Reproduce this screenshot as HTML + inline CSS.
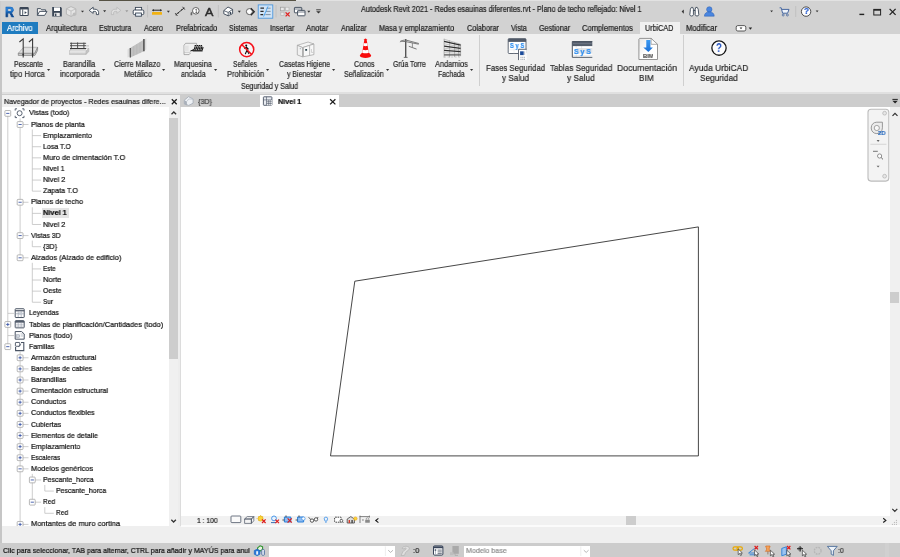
<!DOCTYPE html>
<html lang="es"><head><meta charset="utf-8"><title>Autodesk Revit 2021 - Redes esauinas diferentes.rvt</title>
<style>
html,body{margin:0;padding:0;}
body{width:900px;height:557px;overflow:hidden;position:relative;background:#fff;font-family:'Liberation Sans', sans-serif;}
#app{position:absolute;left:0;top:0;width:900px;height:557px;overflow:hidden;background:#fff;}
#app div,#app svg,#app span{position:absolute;}
#app span{white-space:pre;line-height:10px;transform-origin:0 50%;will-change:transform;-webkit-text-stroke:0.22px currentColor;}
#app svg{overflow:visible;}
</style></head><body><div id="app">
<div style="left:0px;top:0px;width:900px;height:557px;background:#f0f0f0;"></div>
<div style="left:0px;top:0px;width:900px;height:34px;background:#d2d2d2;"></div>
<div style="left:0px;top:0px;width:900px;height:0.9px;background:#e2e2e2;"></div>
<div style="left:98.7px;top:0px;width:197.5px;height:1.3px;background:#565244;"></div>
<div style="left:1.8px;top:22px;width:36.4px;height:12.6px;background:#1f7cc0;"></div>
<div style="left:640px;top:22px;width:39.5px;height:12px;background:#f0f0f0;"></div>
<div style="left:0px;top:34px;width:900px;height:59px;background:#f0f0f0;"></div>
<div style="left:0px;top:92.4px;width:900px;height:1.2px;background:#e0e0e0;"></div>
<div style="left:0px;top:93.5px;width:900px;height:1.7px;background:#cdcdcd;"></div>
<div style="left:180.2px;top:95px;width:719.8px;height:12.2px;background:#cdcdcd;"></div>
<div style="left:1.6px;top:95px;width:178.6px;height:12.5px;background:#f0f0f0;"></div>
<div style="left:2px;top:107.3px;width:167.2px;height:418.7px;background:#fff;"></div>
<div style="left:169.2px;top:107.3px;width:9.2px;height:418.7px;background:#f0f0f0;"></div>
<div style="left:169.3px;top:118.4px;width:9.0px;height:240.6px;background:#cdcdcd;"></div>
<div style="left:178.4px;top:107.2px;width:1.8px;height:418.8px;background:#ededed;"></div>
<div style="left:180.2px;top:107.2px;width:0.8px;height:418.8px;background:#dcdcdc;"></div>
<div style="left:181px;top:107px;width:709px;height:408.7px;background:#fff;"></div>
<div style="left:260px;top:95.1px;width:78.9px;height:12.4px;background:#fff;"></div>
<div style="left:890px;top:107px;width:10px;height:408.7px;background:#f0f0f0;"></div>
<div style="left:890.2px;top:292px;width:9px;height:10.6px;background:#cdcdcd;"></div>
<div style="left:181px;top:515.7px;width:719px;height:9.6px;background:#f1f1f1;"></div>
<div style="left:181px;top:525.3px;width:719px;height:1.6px;background:#fbfbfb;"></div>
<div style="left:626px;top:516.2px;width:10px;height:8.6px;background:#cdcdcd;"></div>
<div style="left:0px;top:526.9px;width:900px;height:15.8px;background:#efefef;z-index:5"></div>
<div style="left:0px;top:526px;width:181px;height:1px;background:#efefef;z-index:5"></div>
<div style="left:0px;top:542.6px;width:900px;height:14.4px;background:#cccccc;"></div>
<div style="left:0px;top:34px;width:1.6px;height:509px;background:#c6c6c6;z-index:6"></div>
<div style="left:0px;top:1px;width:1.2px;height:33px;background:#cdcdcd;"></div>
<div style="left:268.8px;top:545.6px;width:126px;height:11.4px;background:#fff;"></div>
<div style="left:464px;top:545.6px;width:126px;height:11.4px;background:#fff;"></div>
<div style="left:479px;top:35px;width:0.8px;height:50.5px;background:#cfcfcf;"></div>
<div style="left:683.1px;top:35px;width:0.8px;height:50.5px;background:#cfcfcf;"></div>
<div style="left:42.3px;top:207.972px;width:27px;height:10.4px;background:#e4e4e4;"></div>
<div style="left:884.6px;top:543px;width:4.8px;height:14px;background:#d0d0d0;"></div>
<svg style="left:47.0px;top:69.0px" width="3.2" height="2" viewBox="0 0 3.2 2"><path d="M0 0h3.2L1.6 2z" fill="#333"/></svg>
<svg style="left:101.9px;top:69.0px" width="3.2" height="2" viewBox="0 0 3.2 2"><path d="M0 0h3.2L1.6 2z" fill="#333"/></svg>
<svg style="left:161.9px;top:69.0px" width="3.2" height="2" viewBox="0 0 3.2 2"><path d="M0 0h3.2L1.6 2z" fill="#333"/></svg>
<svg style="left:213.70000000000002px;top:69.0px" width="3.2" height="2" viewBox="0 0 3.2 2"><path d="M0 0h3.2L1.6 2z" fill="#333"/></svg>
<svg style="left:266.4px;top:69.0px" width="3.2" height="2" viewBox="0 0 3.2 2"><path d="M0 0h3.2L1.6 2z" fill="#333"/></svg>
<svg style="left:332.0px;top:69.0px" width="3.2" height="2" viewBox="0 0 3.2 2"><path d="M0 0h3.2L1.6 2z" fill="#333"/></svg>
<svg style="left:385.7px;top:69.0px" width="3.2" height="2" viewBox="0 0 3.2 2"><path d="M0 0h3.2L1.6 2z" fill="#333"/></svg>
<svg style="left:469.7px;top:69.0px" width="3.2" height="2" viewBox="0 0 3.2 2"><path d="M0 0h3.2L1.6 2z" fill="#333"/></svg>
<svg style="left:0px;top:0px" width="180" height="526" viewBox="0 0 180 526"><path d="M20.1 124.50800000000001H28.5" stroke="#b8b8b8" stroke-width="0.7"/><path d="M32.3 135.616H41.099999999999994" stroke="#b8b8b8" stroke-width="0.7"/><path d="M32.3 146.724H41.099999999999994" stroke="#b8b8b8" stroke-width="0.7"/><path d="M32.3 157.832H41.099999999999994" stroke="#b8b8b8" stroke-width="0.7"/><path d="M32.3 168.94H41.099999999999994" stroke="#b8b8b8" stroke-width="0.7"/><path d="M32.3 180.048H41.099999999999994" stroke="#b8b8b8" stroke-width="0.7"/><path d="M32.3 191.156H41.099999999999994" stroke="#b8b8b8" stroke-width="0.7"/><path d="M20.1 202.264H28.5" stroke="#b8b8b8" stroke-width="0.7"/><path d="M32.3 213.372H41.099999999999994" stroke="#b8b8b8" stroke-width="0.7"/><path d="M32.3 224.48000000000002H41.099999999999994" stroke="#b8b8b8" stroke-width="0.7"/><path d="M20.1 235.58800000000002H28.5" stroke="#b8b8b8" stroke-width="0.7"/><path d="M32.3 246.696H41.099999999999994" stroke="#b8b8b8" stroke-width="0.7"/><path d="M20.1 257.804H28.5" stroke="#b8b8b8" stroke-width="0.7"/><path d="M32.3 268.91200000000003H41.099999999999994" stroke="#b8b8b8" stroke-width="0.7"/><path d="M32.3 280.02H41.099999999999994" stroke="#b8b8b8" stroke-width="0.7"/><path d="M32.3 291.12800000000004H41.099999999999994" stroke="#b8b8b8" stroke-width="0.7"/><path d="M32.3 302.236H41.099999999999994" stroke="#b8b8b8" stroke-width="0.7"/><path d="M7.8 313.34400000000005H14" stroke="#b8b8b8" stroke-width="0.7"/><path d="M7.8 335.56000000000006H14" stroke="#b8b8b8" stroke-width="0.7"/><path d="M20.1 357.776H28.5" stroke="#b8b8b8" stroke-width="0.7"/><path d="M20.1 368.884H28.5" stroke="#b8b8b8" stroke-width="0.7"/><path d="M20.1 379.99199999999996H28.5" stroke="#b8b8b8" stroke-width="0.7"/><path d="M20.1 391.1H28.5" stroke="#b8b8b8" stroke-width="0.7"/><path d="M20.1 402.20799999999997H28.5" stroke="#b8b8b8" stroke-width="0.7"/><path d="M20.1 413.31600000000003H28.5" stroke="#b8b8b8" stroke-width="0.7"/><path d="M20.1 424.424H28.5" stroke="#b8b8b8" stroke-width="0.7"/><path d="M20.1 435.53200000000004H28.5" stroke="#b8b8b8" stroke-width="0.7"/><path d="M20.1 446.64H28.5" stroke="#b8b8b8" stroke-width="0.7"/><path d="M20.1 457.74800000000005H28.5" stroke="#b8b8b8" stroke-width="0.7"/><path d="M20.1 468.856H28.5" stroke="#b8b8b8" stroke-width="0.7"/><path d="M32.3 479.96400000000006H41.099999999999994" stroke="#b8b8b8" stroke-width="0.7"/><path d="M44.8 491.072H53.8" stroke="#b8b8b8" stroke-width="0.7"/><path d="M32.3 502.18000000000006H41.099999999999994" stroke="#b8b8b8" stroke-width="0.7"/><path d="M44.8 513.288H53.8" stroke="#b8b8b8" stroke-width="0.7"/><path d="M20.1 524.3960000000001H28.5" stroke="#b8b8b8" stroke-width="0.7"/><path d="M20.1 118.4V257.804" stroke="#b8b8b8" stroke-width="0.7"/><path d="M32.3 129.508V191.156" stroke="#b8b8b8" stroke-width="0.7"/><path d="M32.3 207.264V224.48000000000002" stroke="#b8b8b8" stroke-width="0.7"/><path d="M32.3 240.58800000000002V246.696" stroke="#b8b8b8" stroke-width="0.7"/><path d="M32.3 262.804V302.236" stroke="#b8b8b8" stroke-width="0.7"/><path d="M20.1 351.668V526.0" stroke="#b8b8b8" stroke-width="0.7"/><path d="M32.3 473.856V502.18000000000006" stroke="#b8b8b8" stroke-width="0.7"/><path d="M44.8 484.96400000000006V491.072" stroke="#b8b8b8" stroke-width="0.7"/><path d="M44.8 507.18000000000006V513.288" stroke="#b8b8b8" stroke-width="0.7"/><path d="M7.8 113.4V346.668" stroke="#b8b8b8" stroke-width="0.7"/><rect x="4.9" y="110.5" width="5.8" height="5.8" rx="0.8" fill="#fff" stroke="#9a9a9a" stroke-width="0.7"/><path d="M6.199999999999999 113.4H9.4" stroke="#3b56a8" stroke-width="0.9"/><rect x="17.200000000000003" y="121.608" width="5.8" height="5.8" rx="0.8" fill="#fff" stroke="#9a9a9a" stroke-width="0.7"/><path d="M18.5 124.50800000000001H21.700000000000003" stroke="#3b56a8" stroke-width="0.9"/><rect x="17.200000000000003" y="199.364" width="5.8" height="5.8" rx="0.8" fill="#fff" stroke="#9a9a9a" stroke-width="0.7"/><path d="M18.5 202.264H21.700000000000003" stroke="#3b56a8" stroke-width="0.9"/><rect x="17.200000000000003" y="232.68800000000002" width="5.8" height="5.8" rx="0.8" fill="#fff" stroke="#9a9a9a" stroke-width="0.7"/><path d="M18.5 235.58800000000002H21.700000000000003" stroke="#3b56a8" stroke-width="0.9"/><rect x="17.200000000000003" y="254.90399999999997" width="5.8" height="5.8" rx="0.8" fill="#fff" stroke="#9a9a9a" stroke-width="0.7"/><path d="M18.5 257.804H21.700000000000003" stroke="#3b56a8" stroke-width="0.9"/><rect x="4.9" y="321.552" width="5.8" height="5.8" rx="0.8" fill="#fff" stroke="#9a9a9a" stroke-width="0.7"/><path d="M6.199999999999999 324.452H9.4" stroke="#3b56a8" stroke-width="0.9"/><path d="M7.8 322.852V326.052" stroke="#3b56a8" stroke-width="0.9"/><rect x="4.9" y="343.76800000000003" width="5.8" height="5.8" rx="0.8" fill="#fff" stroke="#9a9a9a" stroke-width="0.7"/><path d="M6.199999999999999 346.668H9.4" stroke="#3b56a8" stroke-width="0.9"/><rect x="17.200000000000003" y="354.87600000000003" width="5.8" height="5.8" rx="0.8" fill="#fff" stroke="#9a9a9a" stroke-width="0.7"/><path d="M18.5 357.776H21.700000000000003" stroke="#3b56a8" stroke-width="0.9"/><path d="M20.1 356.176V359.37600000000003" stroke="#3b56a8" stroke-width="0.9"/><rect x="17.200000000000003" y="365.98400000000004" width="5.8" height="5.8" rx="0.8" fill="#fff" stroke="#9a9a9a" stroke-width="0.7"/><path d="M18.5 368.884H21.700000000000003" stroke="#3b56a8" stroke-width="0.9"/><path d="M20.1 367.284V370.48400000000004" stroke="#3b56a8" stroke-width="0.9"/><rect x="17.200000000000003" y="377.092" width="5.8" height="5.8" rx="0.8" fill="#fff" stroke="#9a9a9a" stroke-width="0.7"/><path d="M18.5 379.99199999999996H21.700000000000003" stroke="#3b56a8" stroke-width="0.9"/><path d="M20.1 378.39199999999994V381.592" stroke="#3b56a8" stroke-width="0.9"/><rect x="17.200000000000003" y="388.20000000000005" width="5.8" height="5.8" rx="0.8" fill="#fff" stroke="#9a9a9a" stroke-width="0.7"/><path d="M18.5 391.1H21.700000000000003" stroke="#3b56a8" stroke-width="0.9"/><path d="M20.1 389.5V392.70000000000005" stroke="#3b56a8" stroke-width="0.9"/><rect x="17.200000000000003" y="399.308" width="5.8" height="5.8" rx="0.8" fill="#fff" stroke="#9a9a9a" stroke-width="0.7"/><path d="M18.5 402.20799999999997H21.700000000000003" stroke="#3b56a8" stroke-width="0.9"/><path d="M20.1 400.60799999999995V403.808" stroke="#3b56a8" stroke-width="0.9"/><rect x="17.200000000000003" y="410.41600000000005" width="5.8" height="5.8" rx="0.8" fill="#fff" stroke="#9a9a9a" stroke-width="0.7"/><path d="M18.5 413.31600000000003H21.700000000000003" stroke="#3b56a8" stroke-width="0.9"/><path d="M20.1 411.716V414.91600000000005" stroke="#3b56a8" stroke-width="0.9"/><rect x="17.200000000000003" y="421.524" width="5.8" height="5.8" rx="0.8" fill="#fff" stroke="#9a9a9a" stroke-width="0.7"/><path d="M18.5 424.424H21.700000000000003" stroke="#3b56a8" stroke-width="0.9"/><path d="M20.1 422.82399999999996V426.024" stroke="#3b56a8" stroke-width="0.9"/><rect x="17.200000000000003" y="432.63200000000006" width="5.8" height="5.8" rx="0.8" fill="#fff" stroke="#9a9a9a" stroke-width="0.7"/><path d="M18.5 435.53200000000004H21.700000000000003" stroke="#3b56a8" stroke-width="0.9"/><path d="M20.1 433.932V437.13200000000006" stroke="#3b56a8" stroke-width="0.9"/><rect x="17.200000000000003" y="443.74" width="5.8" height="5.8" rx="0.8" fill="#fff" stroke="#9a9a9a" stroke-width="0.7"/><path d="M18.5 446.64H21.700000000000003" stroke="#3b56a8" stroke-width="0.9"/><path d="M20.1 445.03999999999996V448.24" stroke="#3b56a8" stroke-width="0.9"/><rect x="17.200000000000003" y="454.84800000000007" width="5.8" height="5.8" rx="0.8" fill="#fff" stroke="#9a9a9a" stroke-width="0.7"/><path d="M18.5 457.74800000000005H21.700000000000003" stroke="#3b56a8" stroke-width="0.9"/><path d="M20.1 456.148V459.34800000000007" stroke="#3b56a8" stroke-width="0.9"/><rect x="17.200000000000003" y="465.956" width="5.8" height="5.8" rx="0.8" fill="#fff" stroke="#9a9a9a" stroke-width="0.7"/><path d="M18.5 468.856H21.700000000000003" stroke="#3b56a8" stroke-width="0.9"/><rect x="29.4" y="477.0640000000001" width="5.8" height="5.8" rx="0.8" fill="#fff" stroke="#9a9a9a" stroke-width="0.7"/><path d="M30.699999999999996 479.96400000000006H33.9" stroke="#3b56a8" stroke-width="0.9"/><rect x="29.4" y="499.2800000000001" width="5.8" height="5.8" rx="0.8" fill="#fff" stroke="#9a9a9a" stroke-width="0.7"/><path d="M30.699999999999996 502.18000000000006H33.9" stroke="#3b56a8" stroke-width="0.9"/><rect x="17.200000000000003" y="521.4960000000001" width="5.8" height="5.8" rx="0.8" fill="#fff" stroke="#9a9a9a" stroke-width="0.7"/><path d="M18.5 524.3960000000001H21.700000000000003" stroke="#3b56a8" stroke-width="0.9"/><path d="M20.1 522.796V525.9960000000001" stroke="#3b56a8" stroke-width="0.9"/></svg>
<svg style="left:0px;top:0px" width="900" height="557" viewBox="0 0 900 557"><rect x="20" y="7.5" width="8.2" height="8" rx="0.8" fill="#fff" stroke="#3a4656" stroke-width="1.1"/><path d="M20 8.5H28.2" stroke="#3a4656" stroke-width="1.9"/><path d="M22.7 9.4V15.5" stroke="#3a4656" stroke-width="0.9"/><path d="M24.6 11.2l2.200 1.400-2.200 1.400z" fill="#3a4656"/><path d="M37.4 15.3V8.6h3.2l1 1.2h4v1.6" fill="#f4f4f4" stroke="#3a4656" stroke-width="0.9" stroke-linejoin="round"/><path d="M37.4 15.4l2.2-4h7.4l-2.4 4z" fill="#fff" stroke="#3a4656" stroke-width="0.9" stroke-linejoin="round"/><path d="M52.2 7h8.6l1 1v8.6h-9.6z" fill="#3a4656"/><rect x="54" y="7.4" width="6" height="3.6" fill="#fff"/><rect x="54.2" y="12.8" width="5.6" height="3.2" fill="#e9e9e9"/><rect x="55" y="13.6" width="1.4" height="2.4" fill="#3a4656"/><path d="M71 6.6l4.8 2.2v5.4L71 16.4l-4.6-2.2V8.8z" fill="#e4e4e4" stroke="#aeaeae" stroke-width="0.8" stroke-linejoin="round"/><path d="M66.4 8.8L71 11l4.8-2.2M71 11v5.4" fill="none" stroke="#b4b4b4" stroke-width="0.7"/><circle cx="74.4" cy="14.2" r="1.8" fill="#bdbdbd"/><path d="M81.0 10.65h3.0L82.5 12.549999999999999z" fill="#333"/><path d="M89.2 10.4l4-3.2v2h1.6c2.6 0 3.8 1.6 3.8 3.4v2h-2.2v-1.6c0-1-.6-1.6-1.6-1.6h-1.6v2z" fill="#fff" stroke="#3a4656" stroke-width="0.9" stroke-linejoin="round"/><path d="M103.1 10.25h3.0L104.6 12.149999999999999z" fill="#333"/><path d="M120.8 10.4l-4-3.2v2h-1.6c-2.6 0-3.8 1.6-3.8 3.4v2h2.2v-1.6c0-1 .6-1.6 1.6-1.6h1.6v2z" fill="#dedede" stroke="#b9b9b9" stroke-width="0.8" stroke-linejoin="round"/><path d="M125.3 10.25h3.0L126.8 12.149999999999999z" fill="#9a9a9a"/><rect x="135.4" y="7.4" width="6.2" height="3.4" fill="#fff" stroke="#3a4656" stroke-width="0.9"/><rect x="133.2" y="10" width="10.6" height="4.6" rx="1.2" fill="#fff" stroke="#3a4656" stroke-width="1"/><rect x="135.6" y="13" width="5.8" height="3.2" fill="#eaf2fa" stroke="#3a4656" stroke-width="0.9"/><path d="M147.6 5V17.4M218.4 5V17.4M276 5V17.4" stroke="#bcbcbc" stroke-width="0.8"/><rect x="152" y="12.1" width="10" height="2.7" rx="0.5" fill="#f2b211"/><path d="M152.6 10.2H161.4" stroke="#2b2b2b" stroke-width="1"/><path d="M152 10.2l1.8-1.3v2.6zM162 10.2l-1.8-1.3v2.6z" fill="#2b2b2b"/><path d="M166.9 10.75h3.0L168.4 12.649999999999999z" fill="#333"/><path d="M175.6 14.9L184.4 7.8" stroke="#2b2b2b" stroke-width="0.9"/><path d="M175.2 13.2l2.2 2.8M182.6 6.8l2.2 2.8" stroke="#2b2b2b" stroke-width="0.9"/><path d="M177.4 13.5l1.7-.3-.9-1.1zM182.6 9.3l-1.7.3.9 1.1z" fill="#2b2b2b"/><circle cx="195.8" cy="10.8" r="3.3" fill="#fff" stroke="#555" stroke-width="0.9"/><path d="M192.6 11.4l-2 1.4v2.4h1.6v-2z" fill="#666"/><path d="M223.8 10.6l4.2-3.6 4.6 2.4v4.2l-4.4 2.2-4.4-2z" fill="#fff" stroke="#3a4656" stroke-width="0.9" stroke-linejoin="round"/><path d="M223.8 10.6l4.4 1.8 4.4-3M228.2 12.4v3.4" fill="none" stroke="#3a4656" stroke-width="0.8"/><rect x="229.6" y="12" width="1.6" height="2" fill="#3a4656"/><path d="M237.8 10.75h3.0L239.3 12.649999999999999z" fill="#333"/><circle cx="249.4" cy="11.6" r="3" fill="#fff" stroke="#555" stroke-width="0.9"/><path d="M250.8 8.2l3.4 3.5-3.4 3.5" fill="none" stroke="#2b2b2b" stroke-width="1.4"/><rect x="258.2" y="4.9" width="14.6" height="13.3" fill="#cfe3f6" stroke="#3f8fdc" stroke-width="0.8"/><path d="M260.4 8.2h3.6M260.4 11.4h3.2M260.4 14.6h2.8" stroke="#2b2b2b" stroke-width="1.3"/><path d="M266.6 8.2h4M266 11.4h4.6M265.4 14.6h5.2" stroke="#6d7d8d" stroke-width="0.8"/><path d="M268 6.4L263.6 16.6" stroke="#41a0f0" stroke-width="0.9"/><rect x="280.6" y="7.2" width="3.6" height="3.6" fill="#e8e8e8" stroke="#9a9a9a" stroke-width="0.7"/><rect x="285.6" y="7.2" width="3.4" height="3.4" fill="#e8e8e8" stroke="#b5b5b5" stroke-width="0.7"/><rect x="280.8" y="12.2" width="3.2" height="3.2" fill="#e8e8e8" stroke="#b5b5b5" stroke-width="0.7"/><path d="M285.6 12.4l4 4M289.6 12.4l-4 4" stroke="#e02020" stroke-width="1.3"/><rect x="294.4" y="7.4" width="7.4" height="5.4" rx="0.6" fill="#fff" stroke="#3a4656" stroke-width="0.9"/><rect x="297.6" y="10.4" width="7.4" height="5.4" rx="0.6" fill="#fff" stroke="#3a4656" stroke-width="0.9"/><path d="M297.6 12h7.4M294.4 9h7.4" stroke="#3a4656" stroke-width="0.7"/><path d="M307.3 10.75h3.0L308.8 12.649999999999999z" fill="#333"/><path d="M316.2 9.8H320.8" stroke="#333" stroke-width="0.9"/><path d="M316.2 11.2h4.6l-2.3 2.2z" fill="#333"/><path d="M683.8 9.4v4.4l-2.2-2.2z" fill="#333"/><path d="M690.4 9.2l1-1.8h1.4l.6 1.8v5.6c0 1.6-3.6 1.6-3.6 0zM695.2 9.2l.6-1.8h1.4l1 1.8.6 5.6c0 1.6-3.6 1.6-3.6 0z" fill="#fff" stroke="#3a4656" stroke-width="0.9" stroke-linejoin="round"/><path d="M693.4 10.4h1.8" stroke="#3a4656" stroke-width="1"/><circle cx="709.3" cy="9.4" r="2.7" fill="#4a86e0" stroke="#2d5fb0" stroke-width="0.5"/><path d="M704.4 16.2c0-3.2 2.2-4.2 4.9-4.2s4.9 1 4.9 4.2z" fill="#4a86e0" stroke="#2d5fb0" stroke-width="0.5"/><path d="M770.2 10.5h2.8L771.6 12.3z" fill="#333"/><path d="M779.6 7.8h1.6l1.4 5.4h5l1.4-3.8h-7" fill="#eef3fa" stroke="#4868a0" stroke-width="1" stroke-linejoin="round"/><circle cx="783.2" cy="15" r="1" fill="none" stroke="#4868a0" stroke-width="0.8"/><circle cx="787.4" cy="15" r="1" fill="none" stroke="#4868a0" stroke-width="0.8"/><path d="M795.7 6V17" stroke="#bcbcbc" stroke-width="0.8"/><circle cx="806.1" cy="11.6" r="4.7" fill="#fff" stroke="#3a3a3a" stroke-width="0.9"/><path d="M815.7 10.5h2.8L817.1 12.3z" fill="#333"/><rect x="859.4" y="13.7" width="4.8" height="1.4" fill="#222"/><rect x="873.8" y="9.4" width="6.8" height="5.6" fill="none" stroke="#222" stroke-width="1"/><path d="M873.8 10h6.8" stroke="#222" stroke-width="1.4"/><path d="M889.6 8.9l6 6M895.6 8.9l-6 6" stroke="#222" stroke-width="1.3"/><rect x="736.2" y="25.6" width="9.6" height="5.4" rx="1.6" fill="#fff" stroke="#333" stroke-width="0.8"/><path d="M739.6 27.6h2.8l-1.4 1.6z" fill="#333"/><path d="M748.6999999999999 27.599999999999998h3.4L750.4 29.8z" fill="#222"/><path d="M18.300 53.300L23.800 47.300H37.600L34.900 53.300z" fill="#ececec" stroke="#8c8c8c" stroke-width="0.6" stroke-linejoin="round"/><path d="M22.600 48.800h14.200M21.200 50.300h14.800M19.800 51.800h15.600" stroke="#c9c9c9" stroke-width="0.5"/><path d="M18.300 53.300v2.100h16.600l2.700-5V47.300L34.900 53.300z" fill="#cfcfcf" stroke="#7a7a7a" stroke-width="0.7" stroke-linejoin="round"/><path d="M23.200 57.600V38.800L19.400 42M32.600 57.600V38.800L28.900 42" fill="none" stroke="#333" stroke-width="1.05" stroke-linejoin="miter"/><circle cx="23.200" cy="54.600" r="0.9" fill="#333"/><circle cx="32.600" cy="54.600" r="0.9" fill="#333"/><defs><linearGradient id="gs" x1="0" y1="0" x2="0" y2="1"><stop offset="0" stop-color="#fbfbfb"/><stop offset="1" stop-color="#bcbcbc"/></linearGradient></defs><path d="M69.300 51L72 48.400H88.900L86.100 51z" fill="#f8f8f8" stroke="#a8a8a8" stroke-width="0.5"/><rect x="69.300" y="51" width="16.800" height="3.400" fill="url(#gs)" stroke="#b0b0b0" stroke-width="0.4"/><path d="M86.100 51l2.800-2.600v3l-2.800 3z" fill="#c4c4c4" stroke="#ababab" stroke-width="0.4"/><rect x="86.400" y="45.200" width="2.600" height="1.300" fill="#c8c8c8"/><path d="M70 43.300H86.100M70 45.700H86.100" stroke="#444" stroke-width="0.9"/><path d="M70 48.600H86.100" stroke="#3a3a3a" stroke-width="1.2"/><path d="M71.300 42.600v6M77.600 42.400v6.200M83.900 42.600v6" stroke="#444" stroke-width="0.9"/><path d="M127.500 49.600L146.400 38.200V49.400L127.500 57.400z" fill="#dcdcdc"/><path d="M130.300 48.100L143.900 39.800V51.300L130.300 57.600z" fill="#c1c1c1"/><path d="M133.600 46.200v9.800M136.800 44.200v10.400M140 42.300v10.800" stroke="#b2b2b2" stroke-width="0.5"/><path d="M130.300 48.100V57.600" stroke="#4a4a4a" stroke-width="1.2"/><path d="M143.900 39V51.300" stroke="#555" stroke-width="1.6"/><path d="M184 45.300l1.600-2h11v2.200M184 45.300v9.300h5.100l1.600-1.800" fill="none" stroke="#8f8f8f" stroke-width="0.7" stroke-linejoin="round"/><path d="M184.400 45.600h4.200v5.600h-4.200z" fill="#e3e3e3"/><path d="M184 52.400h5.200" stroke="#b5b5b5" stroke-width="0.6"/><path d="M189.600 52.600l1.400-2" stroke="#9a9a9a" stroke-width="0.6"/><path d="M194.600 45.600h8" stroke="#1a1a1a" stroke-width="1.1" stroke-dasharray="1.5 0.5"/><path d="M190.600 50.800c1.200 0 2.200-.4 3-1.400" fill="none" stroke="#1a1a1a" stroke-width="1.1"/><path d="M192.600 50.800h10" stroke="#1a1a1a" stroke-width="1.3"/><path d="M195.200 46.400l-1.400 4M196.900 46.400l-1.400 4M198.600 46.400l-1.400 4M200.300 46.400l-1.400 4M202 46.400l-1.400 4M203.200 47.200l-1 3" stroke="#1a1a1a" stroke-width="1.05"/><path d="M194.400 48.200h8.600" stroke="#1a1a1a" stroke-width="0.7"/><circle cx="246.7" cy="49.6" r="7.05" fill="#f4f4f4" stroke="#f5101a" stroke-width="1.5"/><circle cx="246.2" cy="45.6" r="1" fill="#111"/><path d="M246.4 46.8l.6 3.4-1.6 3.6M247 50.2l1.8 3.4M244.6 48.2l1.8-1 1.8 1.8" fill="none" stroke="#111" stroke-width="1.1" stroke-linecap="round"/><path d="M241.9 44.7l9.800 9.800" stroke="#f5101a" stroke-width="1.5"/><path d="M297.300 45.300L308.100 42l5.800 2L302.600 47.600z" fill="#f4f4f4" stroke="#a2a2a2" stroke-width="0.7" stroke-linejoin="round"/><path d="M297.300 45.300L302.600 47.600V56.900L297.300 54.900z" fill="#f1f1f1" stroke="#9c9c9c" stroke-width="0.7" stroke-linejoin="round"/><path d="M302.600 47.600L313.900 44V54.600L302.600 56.900z" fill="#f8f8f8" stroke="#9c9c9c" stroke-width="0.7" stroke-linejoin="round"/><path d="M303.500 47.500v9.200M309.600 45.600v9.800" stroke="#a8a8a8" stroke-width="0.8"/><rect x="305.200" y="48.900" width="1.900" height="1.900" rx="0.4" fill="#27404a"/><path d="M300.300 48.200v1" stroke="#6f7f8f" stroke-width="0.7"/><path d="M311.400 49v3.400h2" fill="none" stroke="#c4c4c4" stroke-width="0.8"/><path d="M364.400 39.200Q365.500 37.900 366.600 39.200L368.900 53.400H362.100z" fill="#f80d0d"/><path d="M362.200 52.400L359.800 55.300Q359.700 56.600 361.400 57.200Q365.500 58.700 369.600 57.200Q371.300 56.600 371.200 55.300L368.800 52.400z" fill="#f80d0d"/><path d="M363.800 43Q365.500 43.700 367.200 43L367.650 45.800Q365.500 46.600 363.350 45.800z" fill="#fff"/><path d="M362.700 49.800Q365.500 50.700 368.300 49.800L368.800 52.800Q365.500 53.900 362.200 52.800z" fill="#fff"/><path d="M405.700 39V57.400" stroke="#555" stroke-width="1.4"/><path d="M403.800 57.400h3.800" stroke="#666" stroke-width="0.9"/><path d="M400.200 42.200c.2-1.200 1.400-1.800 5.500-2.200L418.900 43.500M400.400 41.200l5.300.4 13 2.600" fill="none" stroke="#6e6e6e" stroke-width="0.9"/><path d="M412.400 42.800V47.300" stroke="#777" stroke-width="0.8"/><path d="M408.800 46.300L416.600 49.100" stroke="#7a7a7a" stroke-width="1"/><path d="M444.100 38.800V57.600M449.600 40.400V57.400M454.600 42V57M458.600 43.400V56.600M460.600 44.400V56.200" stroke="#9a9a9a" stroke-width="0.7"/><path d="M444.100 39.200L460.600 44.200M444.100 43.800L460.600 46.800M444.100 48.200L460.600 50M444.100 52.600L460.600 53.400" stroke="#a6a6a6" stroke-width="0.6"/><path d="M444.100 41.300L460.600 45.100M444.100 46.100L460.600 48.300M444.100 50.300L460.600 51.600" stroke="#2e2e2e" stroke-width="1.3"/><path d="M444.100 54.900H460.600" stroke="#5c5c5c" stroke-width="1.3"/><path d="M444.100 57H460" stroke="#b0b0b0" stroke-width="0.6" stroke-dasharray="2 1.5"/><rect x="508.200" y="38.700" width="17.800" height="14.800" rx="0.900" fill="#fff" stroke="#505968" stroke-width="0.9"/><rect x="508.200" y="38.700" width="17.800" height="3.200" fill="#505968"/><path d="M508.600 49.800h17M514 48v5.400M519.600 48v5.400" stroke="#dfe3e7" stroke-width="0.5"/><rect x="518.500" y="49.300" width="8.200" height="10.800" fill="#fdfdfd"/><path d="M518.500 60.100V49.300H526.700" fill="none" stroke="#505968" stroke-width="0.9"/><rect x="520.100" y="51.300" width="3.600" height="3.800" fill="#1d4c9a"/><path d="M524.600 51.400v3.600" stroke="#b9c0c8" stroke-width="0.9"/><path d="M520.400 57.300h5M520.400 59.300h5" stroke="#6a7480" stroke-width="0.6" stroke-dasharray="1.2 0.5"/><rect x="572.300" y="41.500" width="20" height="15.900" rx="0.700" fill="#fff"/><rect x="577" y="48" width="15.400" height="5.600" fill="#e2e4e7"/><path d="M572.700 55.400h19.600M576.200 46v11.200M581.600 46v11.200" stroke="#d0d4d9" stroke-width="0.5"/><rect x="572.300" y="41.500" width="20" height="4.600" fill="#545d6b"/><path d="M573 43.600h18.800" stroke="#6f7886" stroke-width="0.9"/><path d="M592.300 41.500H572.300V57.300H592.300" fill="none" stroke="#4c5562" stroke-width="1" stroke-linejoin="round"/><defs><linearGradient id="gb" x1="0" y1="0" x2="0" y2="1"><stop offset="0" stop-color="#3a9af4"/><stop offset="1" stop-color="#1b6fd6"/></linearGradient><linearGradient id="gd" x1="0" y1="0" x2="1" y2="1"><stop offset="0" stop-color="#e6e6e6"/><stop offset="0.5" stop-color="#ffffff"/></linearGradient></defs><path d="M639.600 38.400H651.100L657.500 44.300V59.500H638.900V39.100z" fill="url(#gd)" stroke="#8a8a8a" stroke-width="0.9" stroke-linejoin="round"/><path d="M651.100 38.400V44.300H657.500z" fill="#fff" stroke="#8a8a8a" stroke-width="0.7" stroke-linejoin="round"/><path d="M646.300 40H650.400V47.400H652.900L648.350 51.900L643.300 47.400H646.300z" fill="url(#gb)"/><circle cx="719" cy="48.100" r="8.300" fill="#fbfbfb"/><circle cx="719" cy="48.100" r="7.150" fill="#fcfcfc" stroke="#161616" stroke-width="1.300"/><circle cx="19.6" cy="113.2" r="2.5" fill="#fff" stroke="#4a5464" stroke-width="0.9"/><path d="M15.2 110.60000000000001v-1.8h1.8M24 110.60000000000001v-1.8h-1.8M15.2 115.8v1.8h1.8M24 115.8v1.8h-1.8" fill="none" stroke="#4a5464" stroke-width="0.9"/><rect x="15.2" y="308.744" width="9" height="8.8" rx="0.6" fill="#fff" stroke="#4a5464" stroke-width="1"/><path d="M15.2 310.744h9" stroke="#4a5464" stroke-width="1.2"/><path d="M15.6 313.744h8.200M18.200 311.344v5.8M21.200 311.344v5.8" stroke="#8a93a2" stroke-width="0.6"/><rect x="19" y="312.344" width="3.400" height="2.400" fill="#c3c9d2"/><rect x="15.2" y="320.652" width="9" height="7.2" rx="0.6" fill="#fff" stroke="#4a5464" stroke-width="1"/><path d="M15.2 321.85200000000003h9" stroke="#4a5464" stroke-width="1.6"/><path d="M15.6 324.252h8.200M15.6 326.052h8.200M18.200 322.652v4.8M21.200 322.652v4.8" stroke="#8a93a2" stroke-width="0.5"/><path d="M15.2 331.56h6.400l2.600 2.400v5.200h-9z" fill="#fff" stroke="#4a5464" stroke-width="1" stroke-linejoin="round"/><rect x="16.6" y="334.76" width="3" height="2.600" fill="#cfd5dd" stroke="#8a93a2" stroke-width="0.5"/><path d="M20.600 333.96000000000004h2.400M20.600 335.96000000000004h2.400" stroke="#8a93a2" stroke-width="0.6"/><path d="M15.600 347.06800000000004v3.600h8.200v-8.200h-2.800" fill="none" stroke="#4a5464" stroke-width="1.1"/><rect x="15.400" y="342.468" width="4.400" height="3.800" rx="0.5" fill="#fff" stroke="#4a5464" stroke-width="0.9"/><path d="M18.200 346.868l3-2.800" stroke="#4a5464" stroke-width="0.8"/><path d="M171.800 99.300l4.900 4.900M176.700 99.300l-4.900 4.900" stroke="#1a1a1a" stroke-width="1.25"/><path d="M171.500 114.300l2.300-2.300 2.300 2.300M171.300 519.700l2.300 2.300 2.300-2.300" fill="none" stroke="#333" stroke-width="1.25"/><path d="M184.300 100.200l4.200-3.500 4.600 2.300v4.200l-4.400 2.200-4.400-1.800z" fill="#eef1f5" stroke="#a3abb6" stroke-width="0.8" stroke-linejoin="round"/><path d="M184.300 100.200l2.600 1.200v4l-2.600-1.100z" fill="#a9b0ba"/><path d="M186.900 101.400l1.800-2.400 4.400.2M188.700 99v.1" fill="none" stroke="#b4bbc5" stroke-width="0.7"/><rect x="263.400" y="96.800" width="8.500" height="8.500" rx="0.600" fill="#e9ecf1" stroke="#4a5464" stroke-width="0.9"/><rect x="266.600" y="100" width="5.300" height="5.300" fill="#fff"/><path d="M266.500 96.800v8.500M263.400 99.900h8.500M268.350 99.900v5.400M270.150 99.900v5.400M266.500 101.750h5.400M266.500 103.550h5.400" stroke="#4a5464" stroke-width="0.6"/><path d="M330.100 99.300l5.300 5.100M335.400 99.300l-5.300 5.100" stroke="#1a1a1a" stroke-width="1.25"/><path d="M892.400 99.400h5.400" stroke="#222" stroke-width="1"/><path d="M892.400 100.800h5.400l-2.700 2.800z" fill="#222"/><path d="M892.500 115.900l2.500-2.500 2.500 2.500M892.300 508.900l2.500 2.500 2.500-2.500" fill="none" stroke="#333" stroke-width="1.25"/><rect x="868" y="109.300" width="20.800" height="71.800" rx="3" fill="#f3f3f3" stroke="#bcbcbc" stroke-width="1.1"/><circle cx="884.600" cy="113.200" r="1.900" fill="#e6e6e6" stroke="#a8a8a8" stroke-width="0.6"/><circle cx="884.600" cy="176.200" r="1.900" fill="#e6e6e6" stroke="#a8a8a8" stroke-width="0.6"/><path d="M871.200 128c0-3.600 2.400-5.800 5.600-5.800h5.600v5.600c0 3.400-2.400 5.800-5.600 5.800s-5.600-2.400-5.600-5.600z" fill="#ececec" stroke="#8f8f8f" stroke-width="0.9"/><circle cx="876.800" cy="128" r="2.600" fill="#f8f8f8" stroke="#8f8f8f" stroke-width="0.8"/><path d="M876.6 140.05h3.0L878.1 141.95z" fill="#666"/><path d="M870.400 144.300h16" stroke="#c8c8c8" stroke-width="0.7"/><path d="M873 151.300h4.800" stroke="#666" stroke-width="0.9"/><circle cx="879.600" cy="156" r="2.100" fill="#fff" stroke="#777" stroke-width="0.8"/><path d="M881.200 157.600l1.800 1.800" stroke="#666" stroke-width="1"/><path d="M876.6 165.65h3.0L878.1 167.54999999999998z" fill="#666"/><rect x="231" y="516" width="9.800" height="6.600" rx="0.8" fill="#fafafa" stroke="#4a5464" stroke-width="0.8"/><path d="M244.600 519l2.600-2.400h6.600l-2.400 2.400zM244.600 519h6.800v4.400h-6.800zM251.400 519l2.400-2.400v4.200l-2.400 2.600z" fill="#f4f4f4" stroke="#4a5464" stroke-width="0.7" stroke-linejoin="round"/><circle cx="260.600" cy="518.600" r="2.500" fill="#fbd43a" stroke="#e0a800" stroke-width="0.6"/><path d="M260.600 515.200v.8M257.400 518.600h-.8M258.200 516.200l.5.500M263 516.200l-.5.500M258.200 521l.5-.5" stroke="#e0a800" stroke-width="0.7"/><path d="M262 519.400l3.600 3.600M265.600 519.400l-3.600 3.600" stroke="#dc1c1c" stroke-width="1.2"/><circle cx="274" cy="518.400" r="2.400" fill="#eaf3fd" stroke="#3a8ee6" stroke-width="0.9"/><path d="M271 522.600h5" stroke="#3a6fb0" stroke-width="1"/><path d="M275.400 519.600l3.600 3.600M279 519.600l-3.600 3.600" stroke="#dc1c1c" stroke-width="1.200"/><path d="M284.400 517h6.400v5h-6.400z" fill="#8fbcf0" stroke="#2a7fd8" stroke-width="1"/><path d="M282.400 520h2M286 515.400v2" stroke="#333" stroke-width="0.8"/><path d="M287.600 518.400l4.200 4.200M291.800 518.400l-4.200 4.200" stroke="#dc1c1c" stroke-width="1.200"/><path d="M297.600 517h6v5h-6z" fill="#8fbcf0" stroke="#2a7fd8" stroke-width="1"/><path d="M295.600 520h2M299 515.400v2" stroke="#333" stroke-width="0.8"/><circle cx="303.400" cy="518.600" r="1.700" fill="#fff" stroke="#3a8ee6" stroke-width="0.7"/><path d="M308.600 517.200l2.400 2.600" stroke="#333" stroke-width="0.8"/><circle cx="312" cy="520.600" r="1.700" fill="#fff" stroke="#333" stroke-width="0.8"/><circle cx="316" cy="519.400" r="1.700" fill="#fff" stroke="#333" stroke-width="0.8"/><path d="M313.600 520.200l.8-.3M317.400 518.600l.6-1.600" stroke="#333" stroke-width="0.7"/><path d="M324.200 518.800a1.700 1.700 0 1 1 3.400 0c0 1-.8 1.400-.9 2.400h-1.600c-.1-1-.9-1.400-.9-2.400z" fill="#eaf3fd" stroke="#3a8ee6" stroke-width="0.8"/><path d="M325.300 522.400h1.200" stroke="#3a8ee6" stroke-width="0.8"/><rect x="334.600" y="517.200" width="6.600" height="5" rx="0.6" fill="#fff" stroke="#333" stroke-width="0.9" stroke-dasharray="1.6 0.8"/><circle cx="341.400" cy="520.800" r="1.400" fill="#fff" stroke="#333" stroke-width="0.7"/><path d="M342.400 521.800l1 1" stroke="#333" stroke-width="0.8"/><path d="M347.200 519l3.600-2.400 3.600 2.400v4h-7.200z" fill="#dcdcdc" stroke="#444" stroke-width="0.8" stroke-linejoin="round"/><rect x="348.600" y="520" width="1.400" height="3" fill="#d43a2a"/><rect x="351.400" y="520" width="1.400" height="3" fill="#444"/><circle cx="355.400" cy="518.600" r="1.700" fill="#fbd43a" stroke="#e89a00" stroke-width="0.5"/><path d="M359.600 516.600h10M360 515.600v7.400M369.400 515.600v2" stroke="#666" stroke-width="0.8"/><path d="M362 520h1.800" stroke="#666" stroke-width="0.8"/><rect x="365.200" y="519.800" width="4.600" height="3" rx="0.6" fill="#8a8a8a"/><path d="M366.200 519.800v-.8a1.300 1.300 0 0 1 2.600 0v.8" fill="none" stroke="#8a8a8a" stroke-width="0.7"/><path d="M378.400 518.400l-2.600 2.100 2.600 2.100M883.200 518.300l2.600 2.100-2.600 2.100" fill="none" stroke="#222" stroke-width="1.2"/><path d="M896.400 520.400v.01M896.400 522.400v.01M896.400 524.400v.01M894.400 522.400v.01M894.400 524.400v.01M892.400 524.400v.01" stroke="#b0b0b0" stroke-width="1" stroke-linecap="square"/><path d="M257.600 547.800l2.400-2 2.600 1v2.600l-2.400 1.600-2.600-1z" fill="#e6f2e0" stroke="#2f922f" stroke-width="1.100" stroke-linejoin="round"/><path d="M254.300 550.600l2.800-1.400 2.800 1.400v3.600l-2.800 1.500-2.800-1.500z" fill="#2a78d8" stroke="#1e66c4" stroke-width="0.7" stroke-linejoin="round"/><path d="M256.200 551.200h1.900v3.400h-1.900z" fill="#eaf3fd"/><rect x="261.700" y="549.400" width="2.800" height="6" rx="1.300" fill="#eef3fa" stroke="#46689c" stroke-width="0.8"/><path d="M263.100 550.600v3.600" stroke="#9fb6d6" stroke-width="0.7"/><path d="M385.400 546.400v9.600" stroke="#e2e2e2" stroke-width="0.6"/><path d="M388.200 550.200l2.400 2.200 2.400-2.200M583.800 550.200l2.400 2.200 2.400-2.200" fill="none" stroke="#9a9a9a" stroke-width="0.7"/><path d="M580.800 546.400v9.600" stroke="#e2e2e2" stroke-width="0.6"/><path d="M402.200 548.400c.4-2.600 6.800-3 7.200-.2.300 2.200-3 2.600-3.800 4.400l-1.200 2.800h-3.400l1.800-3.600c.8-1.600 3.400-2 3.400-3.200 0-1-2-.8-2.200.4z" fill="#dedede" stroke="#b2b2b2" stroke-width="0.7" stroke-linejoin="round"/><rect x="433.500" y="545.900" width="9.400" height="9.200" rx="1.100" fill="#fff" stroke="#39455a" stroke-width="1"/><path d="M433.500 547.300h9.400" stroke="#39455a" stroke-width="1.900"/><rect x="434.700" y="549.300" width="1.500" height="1.500" fill="#39455a"/><path d="M435.500 551v3.200" stroke="#8a93a2" stroke-width="0.6"/><path d="M437.600 550.100h4.200M437.600 551.900h4.200M437.600 553.600h4.200" stroke="#4a5464" stroke-width="0.8"/><path d="M452.400 546h6.400v7.800h-6.400z" fill="#a9a9a9"/><path d="M450 552.200h3.600v3h-3.600z" fill="#bdbdbd"/><path d="M455 553.800v1.600h3" stroke="#a9a9a9" stroke-width="0.8" fill="none"/><g transform="translate(0 0.8)"><rect x="733" y="546" width="5.400" height="3.400" rx="1.700" fill="none" stroke="#e8a800" stroke-width="1.200"/><rect x="737" y="546" width="5.400" height="3.400" rx="1.700" fill="none" stroke="#e8a800" stroke-width="1.200"/><g transform="translate(738.2 548.2)"><path d="M0 0v5.600l1.400-1.200 1 2.200 1-.5-1-2.100h1.800z" fill="#fff" stroke="#222" stroke-width="0.6" stroke-linejoin="round"/></g><path d="M748.600 552.200l6-4.600M748.600 552.200h7M749.600 554h6" stroke="#2a7fd8" stroke-width="0.9"/><path d="M754.600 545.200l3.400 3.400M758 545.200l-3.400 3.400" stroke="#dc1c1c" stroke-width="1.200"/><g transform="translate(754.6 549.2)"><path d="M0 0v5.600l1.400-1.200 1 2.200 1-.5-1-2.100h1.800z" fill="#fff" stroke="#222" stroke-width="0.6" stroke-linejoin="round"/></g><path d="M765.800 545.200h4.200v1.300l-.8.500v2.200l1.300 1.300h-5.200l1.300-1.300v-2.200l-.8-.5z" fill="#f5a45a" stroke="#d2641a" stroke-width="0.6"/><path d="M767.900 550.600v3" stroke="#8a6a50" stroke-width="0.8"/><g transform="translate(770.4 549.4)"><path d="M0 0v5.600l1.400-1.200 1 2.200 1-.5-1-2.100h1.800z" fill="#fff" stroke="#222" stroke-width="0.6" stroke-linejoin="round"/></g><path d="M781.800 547.600l4.600-1.600v7.400l-4.600 1.600z" fill="#9cc4f0" stroke="#2a7fd8" stroke-width="0.9" stroke-linejoin="round"/><path d="M787 545.200l3.400 3.400M790.400 545.200l-3.400 3.400" stroke="#dc1c1c" stroke-width="1.200"/><g transform="translate(786.8 549.4)"><path d="M0 0v5.600l1.400-1.200 1 2.200 1-.5-1-2.100h1.800z" fill="#fff" stroke="#222" stroke-width="0.6" stroke-linejoin="round"/></g><path d="M797.400 548h5.400M800.100 545.400v5.400" stroke="#111" stroke-width="1.100"/><path d="M798.800 546.600l-1.400 1.400 1.400 1.400M801.400 546.600l1.400 1.400" fill="none" stroke="#111" stroke-width="0.6"/><g transform="translate(802.4 549.4)"><path d="M0 0v5.600l1.400-1.200 1 2.200 1-.5-1-2.100h1.800z" fill="#fff" stroke="#222" stroke-width="0.6" stroke-linejoin="round"/></g><circle cx="817.700" cy="550" r="3.400" fill="none" stroke="#b6b6b6" stroke-width="1.300" stroke-dasharray="1.800 0.900"/><path d="M827.400 545.600h9.800l-3.800 4.400v4.600l-2.200-1.200v-3.400z" fill="#eef3f9" stroke="#4a6c98" stroke-width="0.9" stroke-linejoin="round"/></g><path d="M354.800 281.200L698.400 226.900V455.900H330.500Z" fill="none" stroke="#262626" stroke-width="0.85"/></svg>
<span style="left:360.50px;top:4px;font-size:8.3px;color:#222;transform:scaleX(0.8751)">Autodesk Revit 2021 - Redes esauinas diferentes.rvt - Plano de techo reflejado: Nivel 1</span>
<span style="left:7.30px;top:24px;font-size:8.2px;color:#fff;transform:scaleX(0.9373)">Archivo</span>
<span style="left:45.60px;top:24px;font-size:8.2px;color:#1e1e1e;transform:scaleX(0.9240)">Arquitectura</span>
<span style="left:98.90px;top:24px;font-size:8.2px;color:#1e1e1e;transform:scaleX(0.8657)">Estructura</span>
<span style="left:144.00px;top:24px;font-size:8.2px;color:#1e1e1e;transform:scaleX(0.8882)">Acero</span>
<span style="left:175.50px;top:24px;font-size:8.2px;color:#1e1e1e;transform:scaleX(0.8894)">Prefabricado</span>
<span style="left:228.90px;top:24px;font-size:8.2px;color:#1e1e1e;transform:scaleX(0.8464)">Sistemas</span>
<span style="left:269.60px;top:24px;font-size:8.2px;color:#1e1e1e;transform:scaleX(0.8752)">Insertar</span>
<span style="left:306.20px;top:24px;font-size:8.2px;color:#1e1e1e;transform:scaleX(0.9244)">Anotar</span>
<span style="left:341.10px;top:24px;font-size:8.2px;color:#1e1e1e;transform:scaleX(0.8684)">Analizar</span>
<span style="left:378.90px;top:24px;font-size:8.2px;color:#1e1e1e;transform:scaleX(0.8921)">Masa y emplazamiento</span>
<span style="left:467.10px;top:24px;font-size:8.2px;color:#1e1e1e;transform:scaleX(0.8845)">Colaborar</span>
<span style="left:511.10px;top:24px;font-size:8.2px;color:#1e1e1e;transform:scaleX(0.8692)">Vista</span>
<span style="left:538.90px;top:24px;font-size:8.2px;color:#1e1e1e;transform:scaleX(0.8761)">Gestionar</span>
<span style="left:582.20px;top:24px;font-size:8.2px;color:#1e1e1e;transform:scaleX(0.9226)">Complementos</span>
<span style="left:645.10px;top:24px;font-size:8.2px;color:#1e1e1e;transform:scaleX(0.8758)">UrbiCAD</span>
<span style="left:686.20px;top:24px;font-size:8.2px;color:#1e1e1e;transform:scaleX(0.9332)">Modificar</span>
<span style="left:13.80px;top:60px;font-size:8.2px;color:#2a2a2a;transform:scaleX(0.8465)">Pescante</span>
<span style="left:10.40px;top:70px;font-size:8.2px;color:#2a2a2a;transform:scaleX(0.9296)">tipo Horca</span>
<span style="left:63.30px;top:60px;font-size:8.2px;color:#2a2a2a;transform:scaleX(0.8868)">Barandilla</span>
<span style="left:60.40px;top:70px;font-size:8.2px;color:#2a2a2a;transform:scaleX(0.9156)">incorporada</span>
<span style="left:113.80px;top:60px;font-size:8.2px;color:#2a2a2a;transform:scaleX(0.8753)">Cierre Mallazo</span>
<span style="left:123.80px;top:70px;font-size:8.2px;color:#2a2a2a;transform:scaleX(0.9180)">Metálico</span>
<span style="left:173.80px;top:60px;font-size:8.2px;color:#2a2a2a;transform:scaleX(0.8836)">Marquesina</span>
<span style="left:181.10px;top:70px;font-size:8.2px;color:#2a2a2a;transform:scaleX(0.8540)">anclada</span>
<span style="left:233.30px;top:60px;font-size:8.2px;color:#2a2a2a;transform:scaleX(0.8110)">Señales</span>
<span style="left:227.30px;top:70px;font-size:8.2px;color:#2a2a2a;transform:scaleX(0.9157)">Prohibición</span>
<span style="left:278.90px;top:60px;font-size:8.2px;color:#2a2a2a;transform:scaleX(0.8506)">Casetas Higiene</span>
<span style="left:287.30px;top:70px;font-size:8.2px;color:#2a2a2a;transform:scaleX(0.8519)">y Bienestar</span>
<span style="left:353.80px;top:60px;font-size:8.2px;color:#2a2a2a;transform:scaleX(0.8702)">Conos</span>
<span style="left:344.00px;top:70px;font-size:8.2px;color:#2a2a2a;transform:scaleX(0.8571)">Señalización</span>
<span style="left:392.90px;top:60px;font-size:8.2px;color:#2a2a2a;transform:scaleX(0.8388)">Grúa Torre</span>
<span style="left:434.90px;top:60px;font-size:8.2px;color:#2a2a2a;transform:scaleX(0.9033)">Andamios</span>
<span style="left:437.80px;top:70px;font-size:8.2px;color:#2a2a2a;transform:scaleX(0.8345)">Fachada</span>
<span style="left:241.10px;top:82px;font-size:8.2px;color:#2a2a2a;transform:scaleX(0.8532)">Seguridad y Salud</span>
<span style="left:485.80px;top:63px;font-size:9.7px;color:#2a2a2a;transform:scaleX(0.8082)">Fases Seguridad</span>
<span style="left:502.30px;top:73px;font-size:9.7px;color:#2a2a2a;transform:scaleX(0.8356)">y Salud</span>
<span style="left:550.00px;top:63px;font-size:9.7px;color:#2a2a2a;transform:scaleX(0.8322)">Tablas Seguridad</span>
<span style="left:567.30px;top:73px;font-size:9.7px;color:#2a2a2a;transform:scaleX(0.8573)">y Salud</span>
<span style="left:617.30px;top:63px;font-size:9.7px;color:#2a2a2a;transform:scaleX(0.8914)">Documentación</span>
<span style="left:639.30px;top:73px;font-size:9.7px;color:#2a2a2a;transform:scaleX(0.8529)">BIM</span>
<span style="left:689.00px;top:63px;font-size:9.7px;color:#2a2a2a;transform:scaleX(0.8695)">Ayuda UrbiCAD</span>
<span style="left:700.00px;top:73px;font-size:9.7px;color:#2a2a2a;transform:scaleX(0.8535)">Seguridad</span>
<span style="left:4.00px;top:97px;font-size:7.9px;color:#222;transform:scaleX(0.9074)">Navegador de proyectos - Redes esauinas difere...</span>
<span style="left:28.60px;top:108px;font-size:8.0px;color:#111;transform:scaleX(0.9002)">Vistas (todo)</span>
<span style="left:30.70px;top:120px;font-size:8.0px;color:#111;transform:scaleX(0.9009)">Planos de planta</span>
<span style="left:43.30px;top:131px;font-size:8.0px;color:#111;transform:scaleX(0.8868)">Emplazamiento</span>
<span style="left:43.30px;top:142px;font-size:8.0px;color:#111;transform:scaleX(0.8722)">Losa T.O</span>
<span style="left:43.30px;top:153px;font-size:8.0px;color:#111;transform:scaleX(0.9270)">Muro de cimentación T.O</span>
<span style="left:43.30px;top:164px;font-size:8.0px;color:#111;transform:scaleX(0.8833)">Nivel 1</span>
<span style="left:43.30px;top:175px;font-size:8.0px;color:#111;transform:scaleX(0.9119)">Nivel 2</span>
<span style="left:43.30px;top:186px;font-size:8.0px;color:#111;transform:scaleX(0.8849)">Zapata T.O</span>
<span style="left:30.70px;top:197px;font-size:8.0px;color:#111;transform:scaleX(0.9063)">Planos de techo</span>
<span style="left:43.30px;top:208px;font-size:8.0px;color:#111;transform:scaleX(0.9226);font-weight:700">Nivel 1</span>
<span style="left:43.30px;top:220px;font-size:8.0px;color:#111;transform:scaleX(0.9119)">Nivel 2</span>
<span style="left:30.70px;top:231px;font-size:8.0px;color:#111;transform:scaleX(0.8711)">Vistas 3D</span>
<span style="left:43.30px;top:242px;font-size:8.0px;color:#111;transform:scaleX(0.8987)">{3D}</span>
<span style="left:30.70px;top:253px;font-size:8.0px;color:#111;transform:scaleX(0.9157)">Alzados (Alzado de edificio)</span>
<span style="left:43.30px;top:264px;font-size:8.0px;color:#111;transform:scaleX(0.7930)">Este</span>
<span style="left:43.30px;top:275px;font-size:8.0px;color:#111;transform:scaleX(0.9457)">Norte</span>
<span style="left:43.30px;top:286px;font-size:8.0px;color:#111;transform:scaleX(0.8668)">Oeste</span>
<span style="left:43.30px;top:297px;font-size:8.0px;color:#111;transform:scaleX(0.8030)">Sur</span>
<span style="left:28.60px;top:308px;font-size:8.0px;color:#111;transform:scaleX(0.8587)">Leyendas</span>
<span style="left:28.60px;top:320px;font-size:8.0px;color:#111;transform:scaleX(0.9165)">Tablas de planificación/Cantidades (todo)</span>
<span style="left:28.60px;top:331px;font-size:8.0px;color:#111;transform:scaleX(0.9077)">Planos (todo)</span>
<span style="left:28.60px;top:342px;font-size:8.0px;color:#111;transform:scaleX(0.8529)">Familias</span>
<span style="left:30.70px;top:353px;font-size:8.0px;color:#111;transform:scaleX(0.9121)">Armazón estructural</span>
<span style="left:30.70px;top:364px;font-size:8.0px;color:#111;transform:scaleX(0.8750)">Bandejas de cables</span>
<span style="left:30.70px;top:375px;font-size:8.0px;color:#111;transform:scaleX(0.8919)">Barandillas</span>
<span style="left:30.70px;top:386px;font-size:8.0px;color:#111;transform:scaleX(0.9173)">Cimentación estructural</span>
<span style="left:30.70px;top:397px;font-size:8.0px;color:#111;transform:scaleX(0.9229)">Conductos</span>
<span style="left:30.70px;top:408px;font-size:8.0px;color:#111;transform:scaleX(0.9182)">Conductos flexibles</span>
<span style="left:30.70px;top:420px;font-size:8.0px;color:#111;transform:scaleX(0.8788)">Cubiertas</span>
<span style="left:30.70px;top:431px;font-size:8.0px;color:#111;transform:scaleX(0.8967)">Elementos de detalle</span>
<span style="left:30.70px;top:442px;font-size:8.0px;color:#111;transform:scaleX(0.8941)">Emplazamiento</span>
<span style="left:30.70px;top:453px;font-size:8.0px;color:#111;transform:scaleX(0.8285)">Escaleras</span>
<span style="left:30.70px;top:464px;font-size:8.0px;color:#111;transform:scaleX(0.9232)">Modelos genéricos</span>
<span style="left:43.30px;top:475px;font-size:8.0px;color:#111;transform:scaleX(0.8767)">Pescante_horca</span>
<span style="left:56.00px;top:486px;font-size:8.0px;color:#111;transform:scaleX(0.8698)">Pescante_horca</span>
<span style="left:43.30px;top:497px;font-size:8.0px;color:#111;transform:scaleX(0.8238)">Red</span>
<span style="left:56.00px;top:508px;font-size:8.0px;color:#111;transform:scaleX(0.8238)">Red</span>
<span style="left:30.70px;top:519px;font-size:8.0px;color:#111;transform:scaleX(0.9362)">Montantes de muro cortina</span>
<span style="left:194.50px;top:6px;font-size:5.6px;color:#333;transform:scaleX(0.8000);font-weight:700;-webkit-text-stroke:0">1</span>
<span style="left:803.90px;top:6px;font-size:8.5px;color:#2a5fd0;transform:scaleX(0.9500);font-weight:700">?</span>
<span style="left:5.30px;top:7px;font-size:15.4px;color:transparent;transform:scaleX(0.8090);font-weight:700;background:linear-gradient(180deg,#2a84dc 30%,#1560b0 55%,#103a74 80%);-webkit-background-clip:text;background-clip:text;-webkit-text-stroke:0.5px #1a62b4">R</span>
<span style="left:204.90px;top:7px;font-size:11.7px;color:#2b2b2b;transform:scaleX(1.0774);-webkit-text-stroke:0.45px #2b2b2b">A</span>
<span style="left:509.80px;top:41px;font-size:7.0px;color:#2a8cf0;transform:scaleX(0.8350);font-weight:700">S y S</span>
<span style="left:573.80px;top:47px;font-size:7.8px;color:#2a8cf0;transform:scaleX(0.8963);font-weight:700">S y S</span>
<span style="left:642.60px;top:51px;font-size:5.9px;color:#333;transform:scaleX(0.9526);font-weight:700;-webkit-text-stroke:0">BIM</span>
<span style="left:716.10px;top:43px;font-size:12px;color:#2050c0;transform:scaleX(0.7898);font-weight:700;-webkit-text-stroke:0">?</span>
<span style="left:198.40px;top:97px;font-size:7.9px;color:#444;transform:scaleX(0.8985)">{3D}</span>
<span style="left:277.80px;top:97px;font-size:7.9px;color:#111;transform:scaleX(0.9154);font-weight:700">Nivel 1</span>
<span style="left:878.30px;top:128px;font-size:6.2px;color:#2f6fc0;transform:scaleX(0.9467);font-weight:700">2D</span>
<span style="left:197.30px;top:516px;font-size:7.6px;color:#222;transform:scaleX(0.8909)">1 : 100</span>
<span style="left:3.20px;top:546px;font-size:8.0px;color:#111;transform:scaleX(0.8819)">Clic para seleccionar, TAB para alternar, CTRL para añadir y MAYÚS para anul</span>
<span style="left:412.70px;top:546px;font-size:7.7px;color:#222;transform:scaleX(0.9655)">:0</span>
<span style="left:466.40px;top:546px;font-size:7.7px;color:#8f8f8f;transform:scaleX(0.9266)">Modelo base</span>
<span style="left:837.80px;top:546px;font-size:7.2px;color:#333;transform:scaleX(0.9333)">:0</span>
</div></body></html>
